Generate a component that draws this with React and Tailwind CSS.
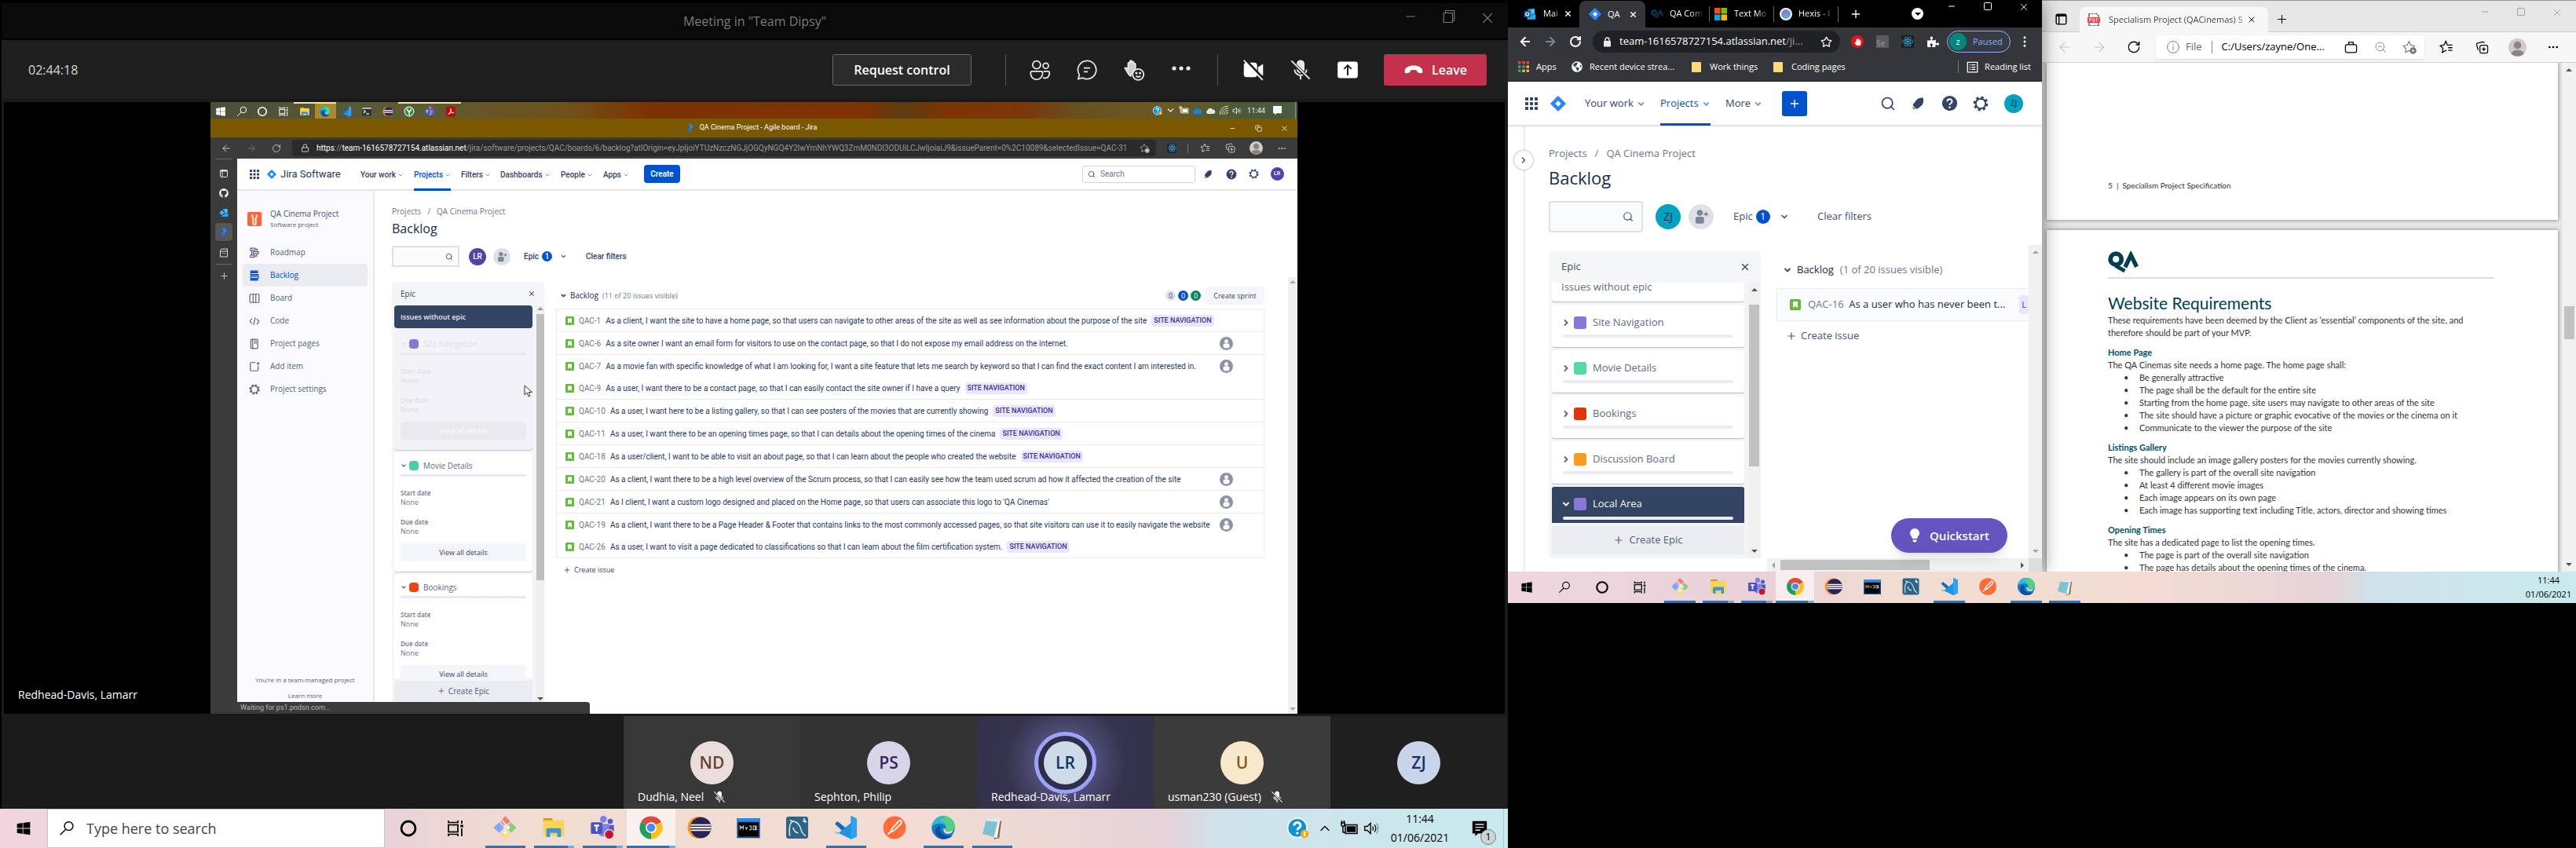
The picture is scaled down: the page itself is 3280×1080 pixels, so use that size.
import React from "react";
import {
  Search, ChevronDown, ChevronUp, ChevronRight, X, Minus, Plus, Ellipsis, EllipsisVertical,
  ArrowLeft, ArrowRight, RotateCw, Lock, Star, Square, ZoomOut, Copy,
} from "lucide-react";
import { FaGithub, FaReact, FaPuzzlePiece, FaHandPaper, FaGlobeAmericas } from "react-icons/fa";

const UI = "font-['Open_Sans','Noto_Sans',sans-serif]";

/* ---------- system and application icons ---------- */

const Svg = ({ c = "w-6 h-6", vb = "0 0 24 24", children, ...rest }) => (
  <svg className={c} viewBox={vb} fill="none" aria-hidden="true" {...rest}>{children}</svg>
);

const WindowsIcon = ({ c }) => (
  <Svg c={c}><path fill="currentColor" d="M2 5l8.500-1.300v7.800H2zM11.500 3.500L22 2v9.500H11.500zM2 12.500h8.500v7.800L2 19zM11.500 12.500H22V22l-10.500-1.500z" /></Svg>
);
const FindIcon = ({ c }) => (
  <Svg c={c} stroke="currentColor" strokeWidth="1.700"><circle cx="15" cy="8.500" r="6.500" /><path d="M10.500 13.500L2 22" /></Svg>
);
const RingIcon = ({ c }) => <Svg c={c}><circle cx="12" cy="12" r="9" stroke="currentColor" strokeWidth="2.800" /></Svg>;
const TaskViewIcon = ({ c }) => (
  <Svg c={c} stroke="currentColor" strokeWidth="1.700">
    <rect x="3" y="7.500" width="12" height="9" /><path d="M3 2v2.500h12V2M3 22v-2.500h12V22M20 2v4M20 12v10" /><path d="M20 7.500v3" strokeWidth="3.500" />
  </Svg>
);
const GitIcon = ({ c }) => (
  <Svg c={c}>
    <path d="M12 1l5 5-5 5-4.500-4.500z" fill="#f47c7c" /><path d="M6.500 7L11 12l-4.500 5L1 12z" fill="#7fa9f7" />
    <path d="M17.500 7L23 12l-5 5-5-5z" fill="#8ec97d" /><path d="M12 13l5 5-5 5-4.500-5z" fill="#fbdc74" />
    <path d="M9 5l6 6.500M12 9v8" stroke="#f6e4de" strokeWidth="1.500" /><circle cx="12" cy="17" r="1.600" fill="#fff" /><circle cx="15" cy="12" r="1.600" fill="#fff" />
  </Svg>
);
const FolderIcon = ({ c }) => (
  <Svg c={c}>
    <path d="M2 4a1 1 0 011-1h7l2 3H2z" fill="#d99a0b" /><path d="M2 5h19a1 1 0 011 1v14H2z" fill="#fcd354" />
    <path d="M5 21v-7a1.500 1.500 0 011.500-1.500h11A1.500 1.500 0 0119 14v7h-3.500v-4h-7v4z" fill="#3d95dc" />
  </Svg>
);
const TeamsIcon = ({ c, rec = true }) => (
  <Svg c={c}>
    <circle cx="19.500" cy="6" r="2.500" fill="#5059c9" /><circle cx="13" cy="4" r="3.200" fill="#7b83eb" />
    <path d="M16 9.500h7V15a4 4 0 01-5 3.500z" fill="#5059c9" /><path d="M8 8.500h10.500V16A5.500 5.500 0 018 17z" fill="#7b83eb" />
    <rect x="1" y="7" width="11" height="11" rx="1" fill="#4b53bc" /><path d="M4 10h5M6.500 10v5.500" stroke="#fff" strokeWidth="1.600" />
    {rec && <circle cx="18.500" cy="18.500" r="4.500" fill="#c4122f" stroke="#f3dcd8" />}
  </Svg>
);
const ChromeIcon = ({ c }) => (
  <Svg c={c}>
    <path d="M12 12L2.500 6.500A11 11 0 0121.500 6.500z" fill="#dd4b3e" /><path d="M12 12L21.500 6.500A11 11 0 0112 23z" fill="#fbc116" />
    <path d="M12 12V23A11 11 0 012.500 6.500z" fill="#1fa05a" /><path d="M12 7h9.800a11 11 0 00-.6-1H3z" fill="#dd4b3e" />
    <circle cx="12" cy="12" r="5.200" fill="#fff" /><circle cx="12" cy="12" r="4" fill="#4a8af4" />
  </Svg>
);
const EclipseIcon = ({ c }) => (
  <Svg c={c}>
    <circle cx="11" cy="12" r="10.500" fill="#f7941e" /><circle cx="13" cy="12" r="10" fill="#2c2255" />
    <path d="M3.500 9.500h19M3 12h20M3.500 14.500h19" stroke="#fff" strokeWidth="1.400" />
  </Svg>
);
const ConsoleIcon = ({ c }) => (
  <Svg c={c}>
    <rect x="1" y="3" width="22" height="19" fill="#1d4f86" /><rect x="1" y="3" width="22" height="3.500" fill="#2d8ae0" />
    <rect x="2.500" y="7" width="19" height="13.500" fill="#000" /><path d="M4 14v-3.500l1.500 2 1.500-2V14M9 11.500l1 2 1-2M12.500 14h2v-3.500h-2M16.500 10.500h2V14h-2zM19.500 10v4h1" stroke="#ddd" strokeWidth=".8" />
  </Svg>
);
const DolphinIcon = ({ c }) => (
  <Svg c={c}>
    <rect x="1.500" y="1.500" width="21" height="21" rx="2.500" fill="#2c6487" />
    <path d="M5 20C4 13 5 7 8 6c4 0 7 4 8 9 1 3 3 4 4 5M8 6c-1-1-2-1-3-1M8 12c1 3 3 5 5 5M18 4l3 3M19 3l-1 3 2 1" stroke="#e4eef4" strokeWidth="1.100" />
  </Svg>
);
const CodeIcon = ({ c }) => (
  <Svg c={c}><path d="M17 1l5.500 2.500v17L17 23 1.500 8.500 4 6l13 10.500z" fill="#0a6fb8" /><path d="M17 1l5.500 2.500v17L17 23 1.500 15.500 4 18 17 7.500z" fill="#1f94e0" /><path d="M17 1l5.500 2.500v17L17 23z" fill="#2ba5f3" /></Svg>
);
const PostmanIcon = ({ c }) => (
  <Svg c={c}>
    <circle cx="12" cy="12" r="10.800" fill="#ff6c37" /><path d="M18 5.500a2 2 0 010 3l-6 6-4 2 2-4 5.500-6a2 2 0 012.500-1zM5.500 18.500l4-3.500" stroke="#fff" strokeWidth="1.400" />
  </Svg>
);
const EdgeIcon = ({ c }) => (
  <Svg c={c}>
    <circle cx="12" cy="12" r="11" fill="#1279c4" /><path d="M1.200 11C2 4 8 1 12 1c7 0 11 5 11 9.500 0 4-3.500 5.500-6.500 5.500-2 0-3-.8-2.500-1.600C15 12.500 14.500 8 9.500 8 5 8 2 10 1.200 11z" fill="#35b6d8" />
    <path d="M14 1.200c6 1 9 5.500 9 9.300 0 4-3.500 5.500-6.500 5.500-2 0-3-.8-2.500-1.600C16 11 15 6 9 5z" fill="#55d377" opacity=".85" />
    <path d="M9.500 10.500C7.500 15 11 20 17 20c2 0 3.500-.5 4.500-1A11 11 0 0112 23C7 23 4.500 19 4.500 15.500c0-3 2.500-5 5-5z" fill="#0c4f9e" />
    <path d="M14 14.400c-.5.800.5 1.600 2.500 1.600 2 0 4-.5 5.200-1.800-1 2.500-2.700 3.600-5 3.600-3.500 0-5-2.500-4.200-5.300.5 0 1.700.8 1.500 1.900z" fill="#f4e3dc" />
  </Svg>
);
const NotepadIcon = ({ c }) => (
  <Svg c={c}><path d="M17 4l4 2-2 16-5 1z" fill="#8a6b3a" /><path d="M15 3l5 1-3 18-4-1z" fill="#f2f6f6" /><path d="M7 3l11 1-4 17-11-3z" fill="#7cc3cf" /><path d="M7 3l11 1-.6 2.500L6 5.400z" fill="#dfeef0" /></Svg>
);
const TerminalIcon = ({ c }) => (
  <Svg c={c}><rect x="2" y="3" width="20" height="18" fill="#2c3138" /><path d="M2 5h20" stroke="#ccc" strokeWidth="3" /><path d="M5 9.500l4 3-4 3M11 17h6" stroke="#fff" strokeWidth="2" /></Svg>
);
const SproutIcon = ({ c }) => (
  <Svg c={c}><circle cx="12" cy="12" r="10" fill="#2e8b3a" stroke="#e9f5e6" strokeWidth="2" /><path d="M12 20V10M12 12C9 12 8 9 8 6M12 12c3 0 4-3 4-6" stroke="#fff" strokeWidth="2.500" /></Svg>
);
const AcrobatIcon = ({ c }) => (
  <Svg c={c}><rect x="2" y="1" width="20" height="22" rx="2" fill="#b50b0b" /><path d="M6 18c5-3 7-8 6-12-2 0 0 8 7 9-5-1-9 0-13 3z" stroke="#fff" strokeWidth="1.600" /></Svg>
);
const JiraIcon = ({ c }) => (
  <Svg c={c}><path d="M12 0l12 12-12 12L0 12z" fill="#2684ff" /><path d="M12 0v8.500L6 15 0 12z" fill="#2f87ff" /><path d="M12 7.500l4.500 4.500-4.500 4.500L7.500 12z" fill="#fff" /></Svg>
);
const JiraAppIcon = ({ c }) => (
  <Svg c={c}><path d="M12 0l8 8-8 9V8L8 4z" fill="#2684ff" /><path d="M12 24l-8-8 8-9v9l4 4z" fill="#1f6fe8" /></Svg>
);
const OutlookIcon = ({ c }) => (
  <Svg c={c}>
    <path d="M8 2h13v18H8z" fill="#1490df" /><path d="M14 2h7v9h-7z" fill="#4cc2f7" /><path d="M7 12l8 5 8-5v10H7z" fill="#2fa9ea" /><rect x="1" y="6" width="12" height="12" rx="1" fill="#0f5fa8" />
    <circle cx="7" cy="12" r="3" stroke="#fff" strokeWidth="1.800" />
  </Svg>
);
const QaMark = ({ c, color = "#003f4f" }) => (
  <Svg c={c} vb="0 0 40 28" preserveAspectRatio="none">
    <ellipse cx="10.500" cy="10.500" rx="7.200" ry="7.200" stroke={color} strokeWidth="6" /><path d="M10 19l12 7" stroke={color} strokeWidth="5" />
    <path d="M22.500 21l7.500-16 7.500 15.500" stroke={color} strokeWidth="5.500" />
  </Svg>
);
const HelpIcon = ({ c }) => (
  <Svg c={c}><circle cx="12" cy="12" r="11" fill="currentColor" /><path d="M8.500 9.500a3.500 3.500 0 117 0c0 2.500-3.500 2.500-3.500 5" stroke="#fff" strokeWidth="2.300" /><circle cx="12" cy="18" r="1.500" fill="#fff" /></Svg>
);
const BellIcon = ({ c }) => (
  <Svg c={c}><path d="M21 2c-6 0-10 1-13 6l-4 5c-1 1.500-.5 2 .5 3l4 4c1 1 1.500 1.500 3 .5l5-4c5-3 5.500-8 4.500-14.500z" fill="currentColor" /><path d="M4 18l3 3a2.500 2.500 0 01-3-3z" fill="currentColor" stroke="currentColor" /></Svg>
);
const GearIcon = ({ c }) => (
  <Svg c={c} stroke="currentColor">
    <circle cx="12" cy="12" r="9.500" strokeWidth="3.500" strokeDasharray="4 3.460" /><circle cx="12" cy="12" r="7.500" strokeWidth="2.400" />
  </Svg>
);
const GridIcon = ({ c, colors = ["currentColor"] }) => (
  <Svg c={c} vb="0 0 16 16">
    {[0, 1, 2, 3, 4, 5, 6, 7, 8].map((i) => (
      <rect key={i} x={(i % 3) * 6} y={Math.floor(i / 3) * 6} width="4" height="4" rx=".8" fill={colors[i % colors.length]} />
    ))}
  </Svg>
);
const StoryIcon = ({ c }) => (
  <Svg c={c} vb="0 0 16 16"><rect width="16" height="16" rx="2" fill="#63ba3c" /><path d="M4.500 3.500h7v9.500L8 10l-3.500 3z" fill="#fff" /></Svg>
);
const AddPersonIcon = ({ c }) => (
  <Svg c={c}><circle cx="10" cy="6" r="4.500" fill="currentColor" /><rect x="3.500" y="12" width="13" height="10.500" rx="3" fill="currentColor" /><path d="M19.500 4.500v7M16 8h7" stroke="currentColor" strokeWidth="2" /></Svg>
);
const UserDisc = ({ c }) => (
  <Svg c={c}><circle cx="12" cy="12" r="12" fill="#8993a4" /><circle cx="12" cy="8" r="3.500" fill="#fff" /><rect x="6.500" y="12" width="11" height="8" rx="2.500" fill="#fff" /></Svg>
);
const ProfileDisc = ({ c }) => (
  <Svg c={c}><circle cx="12" cy="12" r="12" fill="#cfccc9" /><circle cx="12" cy="9" r="5" fill="#8b8683" /><path d="M3.500 20a9 7 0 0117 0A12 12 0 013.500 20z" fill="#8b8683" /></Svg>
);
const StarPlus = ({ c }) => (
  <Svg c={c} stroke="currentColor" strokeWidth="1.500"><path d="M13 19l-2-1-6 3 1.200-6.600L1.500 9.700l6.500-1L11 2.500l3 6.200 6.500 1-2 2" /><circle cx="18" cy="18" r="5" fill="currentColor" /><path d="M18 15.500v5M15.500 18h5" stroke="#fff" strokeWidth="1.200" /></Svg>
);
const StarList = ({ c }) => (
  <Svg c={c} stroke="currentColor" strokeWidth="1.700"><path d="M12 18l-1-.5L5 21l1.200-7L1.500 9.500 8 8.500 11 2l2.700 6.500h8.300M15 13h7M15 17.500h7" /></Svg>
);
const CollectIcon = ({ c }) => (
  <Svg c={c} stroke="currentColor" strokeWidth="1.700"><rect x="8" y="8" width="14" height="14" rx="3" /><path d="M15 11.500v7M11.500 15h7M5 17l-3-10a2.500 2.500 0 012-3l9-2a2.500 2.500 0 013 2" /></Svg>
);
const PagesIcon = ({ c }) => (
  <Svg c={c} stroke="currentColor" strokeWidth="2"><rect x="3" y="3" width="18" height="18" rx="2.500" /><path d="M3 5h18" strokeWidth="4" /><path d="M8 5v16" /></Svg>
);
const VolumeIcon = ({ c }) => (
  <Svg c={c} stroke="currentColor" strokeWidth="1.600"><path d="M2 9h4l5-5v16l-5-5H2zM14 9q2 3 0 6M17 6.500q4 5.500 0 11" /><path d="M20 4q5 8 0 16" opacity=".35" /></Svg>
);
const PowerIcon = ({ c }) => (
  <Svg c={c} stroke="currentColor" strokeWidth="1.500"><rect x="7" y="7.500" width="15" height="11" /><rect x="9.500" y="10" width="10" height="6" fill="currentColor" /><path d="M1 5h6M2 5v3q2 3 4 0V5M2.500 2v3M5.500 2v3M4 9v8h3" /></Svg>
);
const TipIcon = ({ c }) => (
  <Svg c={c}><circle cx="11" cy="11.500" r="10.500" fill="#1292d6" stroke="#fff" strokeWidth="1.500" /><path d="M7.500 9a3.500 3.500 0 117 0c0 2.500-3.500 2.500-3.500 5M11 16v2.500" stroke="#fff" strokeWidth="2.500" /><circle cx="19" cy="18" r="4.500" fill="#f6a91b" /><path d="M19 15.500v5" stroke="#fff" strokeWidth="1.500" /></Svg>
);
const NoteIcon = ({ c }) => (
  <Svg c={c}><path d="M2 2h20v17H10l-4 4v-4H2z" fill="currentColor" /><path d="M6 6.500h12M6 10.500h12M6 14.500h7" stroke="#d6ecee" strokeWidth="1.500" /></Svg>
);
const MicOffIcon = ({ c }) => (
  <Svg c={c} stroke="currentColor" strokeWidth="1.600"><rect x="8.500" y="2" width="7" height="13" rx="3.500" fill="currentColor" /><path d="M5.500 11.500a6.500 6.500 0 0013 0M12 18v4.500" /><path d="M2.500 3l19 19" stroke="#222" strokeWidth="3.500" /><path d="M2 2l20 20" /></Svg>
);

/* ---------- windows taskbars ---------- */

const APPS = [
  { name: "Git", Icon: GitIcon, open: true },
  { name: "File Explorer", Icon: FolderIcon, open: true, many: true },
  { name: "Teams", Icon: TeamsIcon, open: true, many: true },
  { name: "Chrome", Icon: ChromeIcon, open: true, many: true, active: true },
  { name: "Eclipse", Icon: EclipseIcon },
  { name: "MySQL", Icon: ConsoleIcon },
  { name: "Workbench", Icon: DolphinIcon },
  { name: "Visual Studio Code", Icon: CodeIcon, open: true },
  { name: "Postman", Icon: PostmanIcon },
  { name: "Edge", Icon: EdgeIcon, open: true },
  { name: "Notepad", Icon: NotepadIcon, open: true },
];

const AppButtons = ({ cell, icon, bar }) =>
  APPS.map(({ name, Icon, open, many, active }) => (
    <button key={name} aria-label={name} className={`${cell} flex h-full shrink-0 flex-col items-center ${active ? "bg-white/60" : ""}`}>
      <span className="flex flex-1 items-center"><Icon c={icon} /></span>
      <span className={`flex ${active ? "w-full" : bar} ${open ? "bg-[#0a7bd9]" : ""} h-[3px] justify-end`}>
        {many && <span className="h-full w-2 bg-[#64aee8]" />}
      </span>
    </button>
  ));

const BAR_BG = "bg-[linear-gradient(90deg,#efd6de_0%,#e8d1d8_25%,#f1dcd2_35%,#f1dbd2_62%,#e6d3d8_77%,#cfe1e9_81%,#c8ebed_100%)]";

const MainTaskbar = () => (
  <footer className={`flex h-[50px] shrink-0 text-black ${BAR_BG}`}>
    <button aria-label="Start" className="flex w-[60px] items-center justify-center"><WindowsIcon c="h-5 w-5" /></button>
    <label className="flex w-[430px] items-center border border-[#c9c3c5] bg-white pl-[14px]">
      <FindIcon c="h-5 w-5" />
      <input aria-label="Type here to search" placeholder="Type here to search" className="ml-[15px] w-72 bg-transparent text-[18px] text-[#444] outline-none placeholder:text-[#444]" />
    </label>
    <button aria-label="Cortana" className="flex w-[60px] items-center justify-center"><RingIcon c="h-6 w-6" /></button>
    <button aria-label="Task view" className="mr-[2px] flex w-[60px] items-center justify-center"><TaskViewIcon c="h-6 w-6" /></button>
    <AppButtons cell="w-[62px]" icon="h-8 w-8" bar="w-[51px]" />
    <div className="flex-1" />
    <div className="flex w-[40px] items-center justify-center"><TipIcon c="h-7 w-7" /></div>
    <div className="flex w-[28px] items-center justify-center"><ChevronUp className="h-5 w-5" strokeWidth={1.5} /></div>
    <div className="flex w-[34px] items-center justify-center"><PowerIcon c="h-6 w-6" /></div>
    <div className="flex w-[22px] items-center justify-center"><VolumeIcon c="h-5 w-5" /></div>
    <div className="flex w-[102px] flex-col items-center justify-center text-sm leading-6"><span>11:44</span><span>01/06/2021</span></div>
    <div className="relative flex w-[50px] items-center justify-center">
      <NoteIcon c="h-[22px] w-[22px]" />
      <span className="absolute bottom-1 right-1 flex h-5 w-5 items-center justify-center rounded-full border border-[#777] bg-[#ccd4d5] text-[13px]">1</span>
    </div>
    <div className="ml-[5px] mr-[5px] w-px bg-[#aec5c8]" />
  </footer>
);

const SideTaskbar = () => (
  <footer className={`relative z-20 flex h-10 shrink-0 text-black ${BAR_BG}`}>
    <button aria-label="Start" className="flex w-12 items-center justify-center"><WindowsIcon c="h-4 w-4" /></button>
    <button aria-label="Search" className="flex w-12 items-center justify-center"><FindIcon c="h-4 w-4" /></button>
    <button aria-label="Cortana" className="flex w-12 items-center justify-center"><RingIcon c="h-[18px] w-[18px]" /></button>
    <button aria-label="Task view" className="mr-[2px] flex w-12 items-center justify-center"><TaskViewIcon c="h-[18px] w-[18px]" /></button>
    <AppButtons cell="w-[49px]" icon="h-6 w-6" bar="w-10" />
    <div className="flex-1" />
    <div className="flex w-[70px] flex-col items-center justify-center text-[11px] leading-[18px]"><span>11:44</span><span>01/06/2021</span></div>
  </footer>
);

/* ---------- shared screen: Jira backlog in Edge ---------- */

const MINI_APPS = [
  [WindowsIcon, 0], [FindIcon, 0], [RingIcon, 0], [TaskViewIcon, 0], [FolderIcon, 1], [EdgeIcon, 2],
  [CodeIcon, 0], [TerminalIcon, 0], [EclipseIcon, 0], [SproutIcon, 1], [TeamsIcon, 1], [AcrobatIcon, 1],
];

const SharedTaskbar = () => (
  <div className="flex h-[21px] shrink-0 items-center bg-[linear-gradient(90deg,#4c4f37_0%,#5c5b33_18%,#6f5219_33%,#7d3300_40%,#7e3300_60%,#5d3d12_64%,#7f3400_68%,#79380a_75%,#685120_80%,#6b5a22_88%,#475a3c_96%,#4a5c40_100%)] text-white">
    <div className="grid h-full w-[319px] grid-cols-12">
      {MINI_APPS.map(([Icon, state], i) => (
        <div key={i} className={`flex items-center justify-center border-t-2 ${state ? "border-[#efe3b4]" : "border-transparent"} ${state === 2 ? "bg-[#a9892c]" : ""}`}>
          <Icon c="h-[14px] w-[14px]" rec={false} />
        </div>
      ))}
    </div>
    <div className="flex-1" />
    <div className="flex items-center gap-[4px]">
      <TipIcon c="h-[12px] w-[12px]" />
      <ChevronDown className="h-[13px] w-[13px]" />
      <PowerIcon c="h-[13px] w-[13px]" />
      <Svg c="h-[12px] w-[13px]"><path d="M4 20a5 5 0 010-9 7 7 0 0113-2 5.500 5.500 0 012 11z" fill="#1683dd" /></Svg>
      <Svg c="h-[12px] w-[13px]"><path d="M4 20a5 5 0 010-9 7 7 0 0113-2 5.500 5.500 0 012 11z" fill="#e6e6e6" /></Svg>
      <Svg c="h-[13px] w-[13px]" stroke="#ddd" strokeWidth="1.800"><path d="M2 22A20 20 0 0122 2M7 22A15 15 0 0122 7M12 22a10 10 0 0110-10M17 22a5 5 0 015-5" /></Svg>
      <VolumeIcon c="h-[12px] w-[12px]" />
    </div>
    <span className="ml-[7px] w-[24px] text-[9px]">11:44</span>
    <NoteIcon c="ml-[8px] mr-[16px] h-[13px] w-[13px]" />
    <div className="mr-[2px] h-full w-px bg-[#8b9279]" />
  </div>
);

const EdgeDarkChrome = () => (
  <>
    <div className="flex h-6 shrink-0 items-center bg-[#7a5800] font-['Roboto',sans-serif] text-[9px] text-white">
      <div className="flex flex-1 items-center justify-center gap-[6px] pl-[92px]"><JiraAppIcon c="h-3 w-3" /><span className="text-[9px]">QA Cinema Project - Agile board - Jira</span></div>
      <button aria-label="Minimise" className="flex w-[33px] justify-center"><Minus className="h-[9px] w-[9px]" /></button>
      <button aria-label="Restore" className="flex w-[33px] justify-center"><Copy className="h-[9px] w-[9px]" /></button>
      <button aria-label="Close" className="flex w-[33px] justify-center"><X className="h-[11px] w-[11px]" /></button>
    </div>
    <div className="flex h-[27px] shrink-0 items-center bg-[#3b3b3b] pl-1 text-[#d8d8d8]">
      <button aria-label="Back" className="flex w-8 justify-center"><ArrowLeft className="h-[14px] w-[14px]" strokeWidth={1.5} /></button>
      <button aria-label="Forward" className="flex w-8 justify-center text-[#777]"><ArrowRight className="h-[14px] w-[14px]" strokeWidth={1.5} /></button>
      <button aria-label="Reload" className="flex w-8 justify-center"><RotateCw className="h-3 w-3" strokeWidth={1.6} /></button>
      <div className="ml-1 flex h-[21px] min-w-0 flex-1 items-center rounded-sm bg-[#2a2a2b]">
        <Lock className="ml-[11px] h-[11px] w-[11px] shrink-0" />
        <span className="ml-[9px] flex-1 overflow-hidden whitespace-nowrap font-['Roboto',sans-serif] text-[10px] text-[#9a9a9a]">
          <b className="font-normal text-white">https</b>://<b className="font-normal text-white">team-1616578727154.atlassian.net</b>/jira/software/projects/QAC/boards/6/backlog?atlOrigin=eyJpIjoiYTUzNzczNGJjOGQyNGQ4Y2IwYmNhYWQ3ZmM0NDI3ODUiLCJwIjoiaiJ9&amp;issueParent=0%2C10089&amp;selectedIssue=QAC-31
        </span>
        <StarPlus c="mx-2 h-[13px] w-[13px] shrink-0 text-[#aaa]" />
      </div>
      <div className="flex w-[40px] justify-center"><span className="flex h-3 w-3 items-center justify-center bg-[#1c2733]"><FaReact className="h-[11px] w-[11px] text-[#4cb8e6]" /></span></div>
      <div className="h-3 w-px bg-[#777]" />
      <div className="ml-[5px] flex w-8 justify-center"><StarList c="h-[13px] w-[13px]" /></div>
      <div className="flex w-8 justify-center"><CollectIcon c="h-[13px] w-[13px]" /></div>
      <div className="flex w-[34px] justify-center"><ProfileDisc c="h-[17px] w-[17px]" /></div>
      <div className="mr-[4px] flex w-8 justify-center"><Ellipsis className="h-3 w-3" /></div>
    </div>
  </>
);

const EdgeRail = () => (
  <div className="flex w-[34px] shrink-0 flex-col items-center bg-[#3b3b3b] text-[#ddd]">
    <div className="h-px w-[22px] bg-[#666]" />
    <div className="mt-[5px] flex h-[25px] items-center"><PagesIcon c="h-3 w-3" /></div>
    <div className="flex h-[25px] items-center"><FaGithub className="h-3 w-3 text-white" /></div>
    <div className="flex h-[26px] items-center"><OutlookIcon c="h-3 w-3" /></div>
    <div className="flex h-[23px] w-[22px] items-center justify-center rounded-sm bg-[#55565a] shadow"><JiraAppIcon c="h-3 w-3" /></div>
    <div className="mt-[2px] flex h-[25px] items-center">
      <Svg c="h-3 w-3" stroke="currentColor" strokeWidth="2"><path d="M3 5l3-3h15v20H3zM3 8h18M7 13h2M11 13h2M15 13h2" /></Svg>
    </div>
    <div className="mt-[2px] h-px w-[22px] bg-[#666]" />
    <Plus className="mt-2 h-[13px] w-[13px]" strokeWidth={1.5} />
  </div>
);

const miniNav = [
  ["Your work", "w-[68px]"], ["Projects", "w-[60px]"], ["Filters", "w-[50px]"],
  ["Dashboards", "w-[77px]"], ["People", "w-[54px]"], ["Apps", "w-[52px]"],
];

const MiniJiraHeader = () => (
  <header className="flex h-[41px] shrink-0 items-center border-b-2 border-[#e3e5ea] bg-white pl-4 font-['Roboto',sans-serif] text-[10px] font-medium text-[#344563]">
    <GridIcon c="h-3 w-3" />
    <JiraIcon c="ml-[10px] h-3 w-3" />
    <span className="ml-[5px] w-[102px] text-[13px] font-normal text-[#253858]">Jira Software</span>
    <nav className="flex h-full">
      {miniNav.map(([label, w]) => {
        const on = label === "Projects";
        return (
          <div key={label} className={`${w} flex h-full`}>
            <a href="#nav" className={`-mb-[2px] flex items-center gap-[2px] border-b-[3px] pt-[3px] ${on ? "border-[#0052cc] text-[#0052cc]" : "border-transparent"}`}>
              {label}<ChevronDown className="h-2 w-2 opacity-60" strokeWidth={3} />
            </a>
          </div>
        );
      })}
    </nav>
    <button className="h-[23px] w-[46px] rounded-sm bg-[#0052cc] font-semibold text-white">Create</button>
    <div className="flex-1" />
    <label className="flex h-[22px] w-[144px] items-center rounded-[3px] border border-[#cfd3da] pl-[6px]">
      <Search className="h-[10px] w-[10px]" />
      <input aria-label="Search" placeholder="Search" className="ml-[6px] w-24 font-normal outline-none placeholder:text-[#6b778c]" />
    </label>
    <div className="flex w-8 justify-center"><BellIcon c="h-3 w-3" /></div>
    <div className="flex w-7 justify-center"><HelpIcon c="h-[14px] w-[14px]" /></div>
    <div className="flex w-7 justify-center"><GearIcon c="h-[13px] w-[13px]" /></div>
    <div className="mr-[10px] flex w-8 justify-center"><span className="flex h-[17px] w-[17px] items-center justify-center rounded-full bg-[#5243aa] text-[7px] text-white">LR</span></div>
  </header>
);

const sideItems = [
  ["Roadmap", <><rect x="3" y="2" width="11" height="4.500" rx="1" /><rect x="9" y="9.500" width="12" height="4.500" rx="1" /><rect x="3" y="17" width="9" height="4.500" rx="1" /><path d="M6 7v10M15 4h3v5M12 19h5v-5" /></>],
  ["Backlog", <><path d="M4 2h15v4H4zM6 10h16M4 6v16h15v-4H4M4 14h17v4" /><path d="M5 4h13M5 20h13M5 10h15" strokeWidth="3" /></>],
  ["Board", <><rect x="2" y="3" width="20" height="18" rx="2" /><path d="M9 3v18M15 3v18" /></>],
  ["Code", <path d="M7 6l-5 6 5 6M17 7l5 6-5 6M13.500 4l-3 16" />],
  ["Project pages", <><rect x="4" y="2" width="15" height="20" rx="2" /><path d="M8 2v20M11 6h6M11 10h6" /></>],
  ["Add item", <path d="M14 3H5a2 2 0 00-2 2v14a2 2 0 002 2h13a2 2 0 002-2v-9M20 2v6M17 5h6" />],
  ["Project settings", null],
];

const MiniSidebar = () => (
  <aside className="flex w-[175px] shrink-0 flex-col border-r-2 border-[#e6e7ed] bg-[#fafafe] text-[10px] text-[#505f79]">
    <div className="mt-[22px] flex items-center pl-[13px]">
      <span className="flex h-[18px] w-[18px] items-center justify-center rounded-[2px] bg-[#ff6530]">
        <Svg c="h-4 w-4"><path d="M8 3v5a2 2 0 001.500 2v10a2.500 2.500 0 005 0V10A2 2 0 0016 8V3" stroke="#f0f0f0" strokeWidth="3" /></Svg>
      </span>
      <div className="ml-[11px] flex flex-col leading-[14px]">
        <span className="text-[10px] font-medium text-[#42526e]">QA Cinema Project</span><span className="text-[8px]">Software project</span>
      </div>
    </div>
    <nav className="mt-[14px] flex flex-col px-[7px]">
      {sideItems.map(([label, icon]) => {
        const on = label === "Backlog";
        return (
          <a href="#side" key={label} className={`flex h-[29px] items-center rounded-sm pl-2 ${on ? "bg-[#ebecf0] text-[#0052cc]" : ""}`}>
            {icon ? <Svg c="h-[14px] w-[14px]" stroke="currentColor" strokeWidth="2">{icon}</Svg> : <GearIcon c="h-[14px] w-[14px]" />}
            <span className="ml-[13px]">{label}</span>
          </a>
        );
      })}
    </nav>
    <div className="flex-1" />
    <div className="mb-4 flex flex-col items-center gap-[6px] text-[8px] leading-[14px]"><span>You're in a team-managed project</span><a href="#more" className="font-medium">Learn more</a></div>
  </aside>
);

const MiniCard = ({ color, name, faded }) => (
  <div className={`mr-1 flex shrink-0 flex-col rounded-sm px-2 pb-[13px] pt-[9px] text-[9px] shadow-[0_1px_1px_#c1c7d0] ${faded ? "bg-[#f3f3f7]" : "bg-white"}`}>
    <div className={`flex h-4 items-center font-medium ${faded ? "text-[#dddee5]" : "text-[#5e6c84]"}`}>
      <ChevronDown className="h-2 w-2" strokeWidth={4} />
      <span className={`ml-[3px] h-3 w-3 rounded-sm ${color}`} />
      <span className="ml-[6px] text-[10px]">{name}</span>
    </div>
    <div className="mt-[3px] h-[3px] shrink-0 rounded-full bg-[#e8e9ee]" />
    <div className={`mt-[14px] flex flex-col ${faded ? "text-[#dddee5]" : "text-[#6b778c]"}`}>
      <b className="h-[13px] text-[8px] font-semibold leading-[13px]">Start date</b><span className="h-3 leading-3">None</span>
      <b className="mt-3 h-[13px] text-[8px] font-semibold leading-[13px]">Due date</b><span className="h-3 leading-3">None</span>
    </div>
    <button className={`mt-[9px] h-[23px] shrink-0 rounded-sm font-medium ${faded ? "bg-[#e9e9ee] text-white" : "bg-[#f4f5f9] text-[#344563]"}`}>View all details</button>
  </div>
);

const Tri = ({ dir, c = "text-[#555]" }) => (
  <Svg c={`h-2 w-2 ${c}`} vb="0 0 8 8">
    <path fill="currentColor" d={{ up: "M0 6l4-4 4 4z", down: "M0 2l4 4 4-4z", left: "M6 0L2 4l4 4z", right: "M2 0l4 4-4 4z" }[dir]} />
  </Svg>
);

const issues = [
  ["QAC-1", "As a client, I want the site to have a home page, so that users can navigate to other areas of the site as well as see information about the purpose of the site", true, true],
  ["QAC-6", "As a site owner I want an email form for visitors to use on the contact page, so that I do not expose my email address on the internet.", false, true],
  ["QAC-7", "As a movie fan with specific knowledge of what I am looking for, I want a site feature that lets me search by keyword so that I can find the exact content I am interested in.", false, false],
  ["QAC-9", "As a user, I want there to be a contact page, so that I can easily contact the site owner if I have a query", true, true],
  ["QAC-10", "As a user, I want here to be a listing gallery, so that I can see posters of the movies that are currently showing", true, true],
  ["QAC-11", "As a user, I want there to be an opening times page, so that I can details about the opening times of the cinema", true, true],
  ["QAC-18", "As a user/client, I want to be able to visit an about page, so that I can learn about the people who created the website", true, true],
  ["QAC-20", "As a client, I want there to be a high level overview of the Scrum process, so that I can easily see how the team used scrum ad how it affected the creation of the site", false, true],
  ["QAC-21", "As I client, I want a custom logo designed and placed on the Home page, so that users can associate this logo to 'QA Cinemas'", false, true],
  ["QAC-19", "As a client, I want there to be a Page Header & Footer that contains links to the most commonly accessed pages, so that site visitors can use it to easily navigate the website", false, false],
  ["QAC-26", "As a user, I want to visit a page dedicated to classifications so that I can learn about the film certification system.", true, false],
];

const MiniBacklog = () => (
  <main className="flex min-w-0 flex-1 flex-col bg-white pl-[22px] text-[9px] text-[#344563]">
    <div className="mt-[18px] flex h-4 items-center gap-[8px] text-[10px] text-[#6b778c]"><a href="#p">Projects</a><span>/</span><a href="#qa">QA Cinema Project</a></div>
    <h1 className="mt-[2px] h-6 text-base font-medium leading-6 text-[#172b4d]">Backlog</h1>
    <div className="mt-[10px] flex h-[27px] items-center font-['Roboto',sans-serif] text-[10px] font-medium">
      <label className="flex h-full w-[86px] items-center border-2 border-[#dfe1e6] bg-[#fafbfc] pr-[6px]"><input aria-label="Filter issues" className="w-[60px] bg-transparent outline-none" /><Search className="ml-auto h-[10px] w-[10px]" /></label>
      <span className="ml-3 flex h-[22px] w-[22px] items-center justify-center rounded-full bg-[#5243aa] text-[10px] text-white">LR</span>
      <span className="ml-[9px] flex h-[22px] w-[22px] items-center justify-center rounded-full bg-[#dfe1e6] text-[#7a869a]"><AddPersonIcon c="h-[14px] w-[14px]" /></span>
      <button className="ml-[17px] flex w-[79px] items-center gap-[4px]">Epic<span className="flex h-[13px] w-[13px] items-center justify-center rounded-full bg-[#0052cc] text-white">1</span><ChevronDown className="ml-[6px] h-[9px] w-[9px]" strokeWidth={3} /></button>
      <button>Clear filters</button>
    </div>
    <div className="mt-[13px] flex min-h-0 flex-1">
      <section className="relative mb-[15px] mt-[6px] flex w-[194px] shrink-0 flex-col rounded-t bg-[#f4f5f9]">
        <div className="flex h-[30px] shrink-0 items-center justify-between px-[11px] text-[10px] font-medium"><span>Epic</span><X className="h-[10px] w-[10px]" strokeWidth={2.500} /></div>
        <div className="flex min-h-0 flex-1">
          <div className="flex min-h-0 flex-1 flex-col pl-[3px]">
            <div className="flex min-h-0 flex-1 flex-col gap-[3px] overflow-hidden">
              <div className="mr-1 flex h-[29px] shrink-0 items-center rounded-sm bg-[#344563] pl-2 font-semibold text-[#e6e9ef]">Issues without epic</div>
              <MiniCard faded color="bg-[#8777d9]" name="Site Navigation" />
              <MiniCard color="bg-[#4fcca4]" name="Movie Details" />
              <MiniCard color="bg-[#ee4310]" name="Bookings" />
            </div>
            <button className="mb-px mr-1 mt-[3px] flex h-[26px] shrink-0 items-center justify-center gap-1 bg-[#ebecf1] text-[10px] font-medium text-[#505f79]"><Plus className="h-[10px] w-[10px]" />Create Epic</button>
          </div>
          <div className="flex w-[11px] flex-col items-center justify-between bg-[#efeff1]"><div className="flex w-full flex-col items-center"><Tri dir="up" c="text-[#999]" /><div className="mt-[3px] h-[339px] w-[10px] bg-[#bebebe]" /></div><Tri dir="down" /></div>
        </div>
        <Svg c="absolute left-[168px] top-[131px] h-4 w-3" vb="0 0 12 16"><path d="M1 1v12l3-3 2 5 2-1-2-4.500h4.500z" fill="#fff" stroke="#333" /></Svg>
      </section>
      <section className="ml-[15px] mr-[30px] flex min-w-0 flex-1 flex-col pt-3">
        <div className="flex h-[23px] items-center">
          <ChevronDown className="ml-[5px] h-[9px] w-[9px]" strokeWidth={4} /><b className="ml-1 text-[10px] font-medium text-[#172b4d]">Backlog</b><span className="ml-[5px] text-[9px] text-[#6b778c]">(11 of 20 issues visible)</span>
          <div className="flex-1" />
          <span className="h-[13px] w-[13px] rounded-full bg-[#dfe1e6] text-center leading-[13px]">0</span>
          <span className="ml-[3px] h-[13px] w-[13px] rounded-full bg-[#0052cc] text-center leading-[13px] text-white">0</span>
          <span className="ml-[3px] h-[13px] w-[13px] rounded-full bg-[#00875a] text-center leading-[13px] text-white">0</span>
          <button className="ml-[6px] h-full w-[75px] rounded-sm bg-[#f4f5f9] font-medium">Create sprint</button>
        </div>
        <ul className="mt-[5px] flex h-[318px] flex-col border border-[#ebecf0] font-['Roboto',sans-serif] text-[10px]">
          {issues.map(([key, text, tag, line]) => (
            <li key={key} className={`flex flex-1 items-center whitespace-nowrap pl-[11px] pr-[39px] ${line ? "border-b border-[#ebecf0]" : ""}`}>
              <StoryIcon c="h-[11px] w-[11px] shrink-0" />
              <a href="#issue" className="ml-[6px] text-[#6b778c]">{key}</a>
              <span className="ml-[6px] text-[#253858]">{text}</span>
              {tag ? <span className="ml-[6px] rounded-sm bg-[#eae6ff] px-[3px] text-[9px] font-medium leading-[15px] text-[#403294]">SITE NAVIGATION</span> : <span className="ml-auto"><UserDisc c="h-[17px] w-[17px]" /></span>}
            </li>
          ))}
        </ul>
        <button className="mt-[7px] flex h-4 items-center gap-1 pl-[9px] font-medium"><Plus className="h-[10px] w-[10px]" />Create issue</button>
      </section>
      <div className="flex w-3 flex-col items-center justify-between bg-[#f1f1f1] py-[2px]"><Tri dir="up" c="text-[#aaa]" /><Tri dir="down" c="text-[#aaa]" /></div>
    </div>
  </main>
);

const SharedScreen = () => (
  <div className="flex min-w-0 flex-1 flex-col overflow-hidden">
    <SharedTaskbar />
    <EdgeDarkChrome />
    <div className="flex min-h-0 flex-1">
      <EdgeRail />
      <div className="relative flex min-w-0 flex-1 flex-col">
        <MiniJiraHeader />
        <div className="flex min-h-0 flex-1"><MiniSidebar /><MiniBacklog /></div>
        <div className="absolute bottom-0 left-0 h-[15px] w-[449px] rounded-tr-sm bg-[#3b3b3b] pl-1 font-['Roboto',sans-serif] text-[9px] leading-[14px] text-[#b9b9b9]">Waiting for ps1.pndsn.com...</div>
      </div>
    </div>
  </div>
);

/* ---------- Teams meeting window ---------- */

const IconCell = ({ label, children }) => <button aria-label={label} className="flex w-[60px] justify-center text-[#e8e8e8]">{children}</button>;

const people = [
  { i: "ND", n: "Dudhia, Neel", mute: true, tile: "bg-[#383838]", disc: "bg-[#e9dedb] text-[#6b4332]" },
  { i: "PS", n: "Sephton, Philip", tile: "bg-[#323232]", disc: "bg-[#d8d4e8] text-[#32265c]" },
  { i: "LR", n: "Redhead-Davis, Lamarr", talk: true, tile: "bg-[radial-gradient(circle,#64639a_15%,#4a4970_35%,#35334d_60%,#32314a_100%)]", disc: "bg-[#cddae8] text-[#123663]" },
  { i: "U", n: "usman230 (Guest)", mute: true, tile: "bg-[#3b3b3b]", disc: "bg-[#f8e9cd] text-[#835c12]" },
  { i: "ZJ", n: "", tile: "bg-[#1f1f1f]", disc: "bg-[#c8d4e8] text-[#12315f]" },
];

const TeamsWindow = () => (
  <div className="flex min-h-0 flex-1 flex-col border-l-2 border-t-4 border-black bg-[#1a1a1a]">
    <div className="grid h-[47px] shrink-0 grid-cols-[1fr_auto_1fr] items-center border-b-2 border-black bg-[#0a0a0a] text-[#797979]">
      <span />
      <span className="text-base">Meeting in "Team Dipsy"</span>
      <div className="flex justify-end pb-2 pr-[2px]">
        <button aria-label="Minimise" className="flex w-[49px] justify-center"><Minus className="h-[18px] w-[18px]" strokeWidth={1.5} /></button>
        <button aria-label="Restore" className="flex w-[49px] justify-center"><Svg c="h-[18px] w-[18px]" stroke="currentColor" strokeWidth="1.500"><path d="M3 6h15v16H3zM6 6V2h15v17h-3" /></Svg></button>
        <button aria-label="Close" className="flex w-[49px] justify-center"><X className="h-[22px] w-[22px]" strokeWidth={1.2} /></button>
      </div>
    </div>
    <div className="flex h-[75px] shrink-0 items-center bg-[#1f1f1f] pl-[34px] pr-[27px] text-white">
      <span className="text-base text-[#d6d6d6]">02:44:18</span>
      <div className="flex-1" />
      <button className="h-10 w-[177px] rounded-[3px] border border-[#6a6a6a] bg-[#2b2b2b] text-base font-semibold">Request control</button>
      <div className="ml-[43px] h-10 w-px bg-[#555]" />
      <div className="ml-[13px] flex">
        <IconCell label="People"><Svg c="h-7 w-7" stroke="currentColor" strokeWidth="1.500"><circle cx="8.500" cy="6.500" r="4.300" /><circle cx="18.500" cy="7.500" r="3" /><path d="M3.500 13.500h10a1.500 1.500 0 011.500 1.500v1a6.500 6.500 0 01-13 0v-1a1.500 1.500 0 011.500-1.500zM16 13.500h5a1.500 1.500 0 011.500 1.500c0 5-3 7-7 5.500" /></Svg></IconCell>
        <IconCell label="Chat"><Svg c="h-7 w-7" stroke="currentColor" strokeWidth="1.500"><path d="M12 2a10 10 0 11-4.700 18.800L2.500 22l1.200-4.700A10 10 0 0112 2zM8.500 10h7M8.500 14h4.500" /></Svg></IconCell>
        <IconCell label="Reactions"><Svg c="h-7 w-7" stroke="currentColor" strokeWidth="1.500"><path d="M9 19C5 18 5 14 2 10c1.500-1 2.500 0 3.500 1V5c0-1.500 2-1.500 2 0V3c0-1.500 2-1.500 2 0v1c0-1.500 2-1.500 2 0v2c0-1.500 2-1.500 2 0v5" fill="#cfcfcf" /><circle cx="16.500" cy="17" r="6" fill="#1f1f1f" /><path d="M14 18.500q2.500 2.500 5 0" /><circle cx="14.500" cy="15.500" r=".6" /><circle cx="18.500" cy="15.500" r=".6" /></Svg></IconCell>
        <IconCell label="More"><Svg c="h-6 w-6"><circle cx="3" cy="12" r="2.600" fill="currentColor" /><circle cx="12" cy="12" r="2.600" fill="currentColor" /><circle cx="21" cy="12" r="2.600" fill="currentColor" /></Svg></IconCell>
      </div>
      <div className="ml-4 h-10 w-px bg-[#555]" />
      <div className="ml-[15px] flex">
        <IconCell label="Camera off"><Svg c="h-7 w-7"><rect x="1.500" y="4" width="14.500" height="16" rx="3" fill="#fff" /><path d="M17 9l5.500-3.500v13L17 15z" fill="#fff" /><path d="M3 1l21 22" stroke="#1f1f1f" strokeWidth="3" /><path d="M1.500 1.500L22 23" stroke="#fff" strokeWidth="1.500" /></Svg></IconCell>
        <IconCell label="Muted"><MicOffIcon c="h-7 w-7" /></IconCell>
        <IconCell label="Share"><Svg c="h-7 w-7"><rect x="1" y="3" width="22" height="18" rx="2.500" fill="#fff" /><path d="M12 18V7M8 11l4-4 4 4" stroke="#1f1f1f" strokeWidth="1.700" /></Svg></IconCell>
      </div>
      <button className="ml-4 flex h-10 w-[131px] items-center justify-center gap-[10px] rounded-[3px] bg-[#c4314b] text-base font-semibold">
        <Svg c="h-[26px] w-[26px]"><path d="M12 7C6 7 1.500 9.500 1.500 13.500c0 2 1 2.700 2.500 2.400l2.500-.6c1.200-.3 1.500-1 1.500-2.300 2-1.200 6-1.200 8 0 0 1.300.3 2 1.500 2.300l2.500.6c1.500.3 2.500-.4 2.500-2.400C22.500 9.500 18 7 12 7z" fill="#fff" /></Svg>
        Leave
      </button>
    </div>
    <div className="ml-[3px] mr-[4px] mt-[4px] flex min-h-0 flex-1 bg-black">
      <div className="flex w-[263px] shrink-0 flex-col justify-end pb-[14px] pl-[18px] text-sm text-white">Redhead-Davis, Lamarr</div>
      <SharedScreen />
      <div className="w-[264px] shrink-0" />
    </div>
    <div className="mt-[3px] flex h-[118px] shrink-0 justify-end pr-px">
      {people.map((p) => (
        <div key={p.i} className={`relative flex w-[225px] justify-center pt-8 ${p.tile}`}>
          {p.talk && <span className="absolute left-[73px] top-[20px] h-[79px] w-[79px] rounded-full border-[5px] border-[#9ea2ff] bg-[#2f2e48]" />}
          <span className={`relative flex h-[55px] w-[55px] items-center justify-center rounded-full text-[21px] font-semibold ${p.disc}`}>{p.i}</span>
          <span className="absolute bottom-[5px] left-[18px] flex items-center gap-3 text-sm text-white">{p.n}{p.mute && <MicOffIcon c="h-4 w-4" />}</span>
        </div>
      ))}
    </div>
  </div>
);

/* ---------- Chrome window ---------- */

const FADE = "overflow-hidden whitespace-nowrap [mask-image:linear-gradient(to_right,black_60%,transparent)]";

const ChromeChrome = () => (
  <>
    <div className="flex h-[35px] shrink-0 items-center bg-black text-[11px] text-white">
      <div className="flex w-[91px] items-center pl-5"><OutlookIcon c="h-4 w-4" /><span className={`ml-[9px] w-[22px] ${FADE}`}>Mai</span><X className="ml-1 h-[11px] w-[11px]" strokeWidth={3} /></div>
      <div className="mt-px flex h-[34px] w-[84px] items-center rounded-t-lg bg-[#35363a] pl-3"><JiraIcon c="h-4 w-4" /><span className="ml-2 w-[20px]">QA</span><X className="ml-[7px] h-[11px] w-[11px]" strokeWidth={3} /></div>
      <div className="flex h-5 w-[82px] items-center border-r border-[#666] pl-[7px]"><QaMark c="h-[11px] w-4" color="#07384a" /><span className={`ml-2 w-[44px] ${FADE}`}>QA Com</span></div>
      <div className="flex h-5 w-[82px] items-center border-r border-[#666] pl-[6px]">
        <Svg c="h-4 w-4" vb="0 0 16 16"><path d="M0 0h7.500v7.500H0z" fill="#f25022" /><path d="M8.500 0H16v7.500H8.500z" fill="#7fba00" /><path d="M0 8.500h7.500V16H0z" fill="#00a4ef" /><path d="M8.500 8.500H16V16H8.500z" fill="#ffb900" /></Svg>
        <span className={`ml-[9px] w-[46px] ${FADE}`}>Text Mo</span>
      </div>
      <div className="flex h-5 w-[82px] items-center border-r border-[#666] pl-[7px]"><span className="h-4 w-4 rounded-full border-2 border-white bg-linear-to-b from-[#7a70d8] to-[#5bb5c9]" /><span className={`ml-2 w-[46px] ${FADE}`}>Hexis - I</span></div>
      <button aria-label="New tab" className="flex w-11 justify-center"><Plus className="h-4 w-4" /></button>
      <div className="flex-1" />
      <span className="mr-[13px] flex h-[15px] w-[15px] items-center justify-center rounded-full bg-white"><Tri dir="down" c="text-black" /></span>
      <div className="flex h-full items-start pt-[2px]">
        <button aria-label="Minimise" className="flex w-[46px] justify-center"><Minus className="h-3 w-3" /></button>
        <button aria-label="Maximise" className="flex w-[46px] justify-center"><Square className="h-3 w-3" /></button>
        <button aria-label="Close" className="flex w-[46px] justify-center"><X className="h-[14px] w-[14px]" strokeWidth={1.5} /></button>
      </div>
    </div>
    <div className="flex h-9 shrink-0 items-center bg-[#35363a] pl-[6px] pr-1 text-[13px] text-white">
      <button aria-label="Back" className="flex w-8 justify-center"><ArrowLeft className="h-[18px] w-[18px]" strokeWidth={2.500} /></button>
      <button aria-label="Forward" className="flex w-8 justify-center text-[#85868a]"><ArrowRight className="h-[18px] w-[18px]" strokeWidth={2.500} /></button>
      <button aria-label="Reload" className="flex w-8 justify-center"><RotateCw className="h-4 w-4" strokeWidth={3} /></button>
      <div className="ml-[6px] flex h-7 min-w-0 flex-1 items-center rounded-full bg-[#202124] px-[13px]">
        <Svg c="h-[13px] w-[11px] shrink-0" vb="0 0 11 13"><rect x="1" y="5" width="9" height="7.500" rx="1" fill="#e8eaed" /><path d="M3 6V3.500a2.500 2.500 0 015 0V6" stroke="#e8eaed" strokeWidth="1.500" /></Svg>
        <span className="ml-[10px] min-w-0 flex-1 truncate">team-1616578727154.atlassian.net<span className="text-[#9aa0a6]">/ji...</span></span>
        <Star className="mr-[-3px] h-[15px] w-[15px]" />
      </div>
      <div className="ml-[6px] flex w-8 justify-center"><span className="flex h-4 w-4 items-center justify-center rounded-full bg-[#e3141b]"><FaHandPaper className="h-[9px] w-[9px]" /></span></div>
      <div className="flex w-8 justify-center"><span className="flex h-4 w-4 items-end bg-[#5b5b5d] text-[10px] font-semibold leading-3 text-[#8e8e90]">Se</span></div>
      <div className="flex w-8 justify-center"><span className="flex h-4 w-4 items-center justify-center bg-[#1e2124]"><FaReact className="h-[14px] w-[14px] text-[#2fb9e8]" /></span></div>
      <div className="flex w-8 justify-center"><FaPuzzlePiece className="h-[15px] w-[15px]" /></div>
      <button className="ml-[2px] flex h-7 w-[81px] shrink-0 items-center rounded-full border border-[#8ab4f8] bg-[#363b45] pl-[2px] text-[11px] text-[#8ab4f8]"><span className="mr-2 flex h-[22px] w-[22px] items-center justify-center rounded-full bg-[#00897b] text-white">z</span>Paused</button>
      <button aria-label="Menu" className="flex w-9 justify-center"><EllipsisVertical className="h-[18px] w-[18px]" /></button>
    </div>
    <div className="flex h-[33px] shrink-0 items-center border-b border-[#202124] bg-[#35363a] pb-1 pl-[13px] pr-[14px] text-[11px] text-white">
      <a href="#apps" className="flex w-[68px] items-center gap-[9px]"><GridIcon c="h-[14px] w-[14px]" colors={["#ea4335", "#ea4335", "#ea4335", "#34a853", "#4285f4", "#fbbc05", "#34a853", "#fbbc05", "#fbbc05"]} />Apps</a>
      <a href="#recent" className="flex w-[151px] items-center gap-[9px]"><FaGlobeAmericas className="h-[14px] w-[14px]" />Recent device strea...</a>
      <a href="#work" className="flex w-[104px] items-center gap-[9px]"><span className="mx-[2px] h-[13px] w-[12px] rounded-[1px] bg-[#fbdc7c]" />Work things</a>
      <a href="#coding" className="flex items-center gap-[9px]"><span className="mx-[2px] h-[13px] w-[12px] rounded-[1px] bg-[#fbdc7c]" />Coding pages</a>
      <div className="flex-1" />
      <div className="mr-[10px] h-4 w-px bg-[#777]" />
      <a href="#reading" className="flex items-center gap-2"><Svg c="h-[15px] w-[15px]" stroke="#fff" strokeWidth="2"><path d="M2 2h20v20H2zM6 7.500h2M10 7.500h8M6 12h2M10 12h8M6 16.500h2M10 16.500h8" /></Svg>Reading list</a>
    </div>
  </>
);

const EpicCard = ({ color, name }) => (
  <div className="mr-1 flex h-[54px] shrink-0 flex-col rounded-[3px] bg-white px-3 shadow-[0_1px_1px_#b3bac5]">
    <div className="mt-[13px] flex h-5 items-center text-[#5e6c84]"><ChevronRight className="h-3 w-3" strokeWidth={4} /><span className={`ml-1 h-4 w-4 rounded-[3px] ${color}`} /><span className="ml-2">{name}</span></div>
    <div className="mx-[2px] mt-[5px] h-1 rounded-full bg-[#ebecf0]" />
  </div>
);

const chromeNav = [["Your work", "w-24"], ["Projects", "w-[83px]"], ["More", "w-[72px]"]];

const ChromeWindow = () => (
  <div className="relative z-10 flex min-w-0 flex-1 flex-col overflow-hidden bg-white shadow-[0_0_22px_rgba(0,0,0,0.5)]">
    <ChromeChrome />
    <header className="z-10 flex h-14 shrink-0 items-center border-b border-[#dfe1e6] pl-[22px] text-[13px] font-medium text-[#344563] shadow-sm">
      <GridIcon c="h-4 w-4" /><JiraIcon c="ml-4 h-5 w-5" />
      <nav className="ml-6 flex h-full">
        {chromeNav.map(([label, w]) => (
          <div key={label} className={`flex h-full ${w}`}>
            <a href="#nav" className={`-mb-px flex items-center gap-1 border-b-[3px] pt-[3px] ${label === "Projects" ? "border-[#0052cc] text-[#0052cc]" : "border-transparent"}`}>{label}<ChevronDown className="h-[11px] w-[11px] opacity-60" strokeWidth={4} /></a>
          </div>
        ))}
      </nav>
      <button aria-label="Create" className="flex h-8 w-8 items-center justify-center rounded-[3px] bg-[#0052cc] text-white"><Plus className="h-4 w-4" /></button>
      <div className="flex-1" />
      <div className="flex w-9 justify-center"><Search className="h-5 w-5" /></div>
      <div className="flex w-10 justify-center"><BellIcon c="h-[18px] w-[18px]" /></div>
      <div className="flex w-10 justify-center"><HelpIcon c="h-[21px] w-[21px]" /></div>
      <div className="flex w-10 justify-center"><GearIcon c="h-5 w-5" /></div>
      <div className="mr-[14px] flex w-11 justify-center"><span className="flex h-6 w-6 items-center justify-center rounded-full bg-[#00a3bf] text-[10px] text-[#172b4d]">ZJ</span></div>
    </header>
    <div className="flex min-h-0 flex-1 text-[13px] text-[#42526e]">
      <aside className="relative w-[22px] shrink-0 border-r-2 border-[#ebecf0]">
        <button aria-label="Expand sidebar" className="absolute left-2 top-8 flex h-6 w-6 items-center justify-center rounded-full bg-white shadow-[0_0_3px_#8993a4]"><ChevronRight className="h-3 w-3" strokeWidth={3} /></button>
      </aside>
      <main className="flex min-w-0 flex-1 flex-col pl-[30px]">
        <div className="mt-[26px] flex h-5 items-center gap-[10px] text-[#6b778c]"><a href="#p">Projects</a><span>/</span><a href="#qa">QA Cinema Project</a></div>
        <h1 className="mt-1 h-8 text-[22px] font-medium leading-8 text-[#172b4d]">Backlog</h1>
        <div className="mt-[14px] flex h-10 shrink-0 items-center">
          <label className="flex h-full w-[120px] items-center rounded-[3px] border-2 border-[#dfe1e6] bg-[#fafbfc] pr-[10px]"><input aria-label="Filter issues" className="w-20 bg-transparent outline-none" /><Search className="ml-auto h-[14px] w-[14px]" /></label>
          <span className="ml-4 flex h-8 w-8 items-center justify-center rounded-full bg-[#00a3bf] text-sm font-medium text-[#172b4d]">ZJ</span>
          <span className="ml-[10px] flex h-8 w-8 items-center justify-center rounded-full bg-[#dfe1e6] text-[#7a869a]"><AddPersonIcon c="h-5 w-5" /></span>
          <button className="ml-[25px] flex w-[107px] items-center gap-1">Epic<span className="flex h-[18px] w-[18px] items-center justify-center rounded-full bg-[#0052cc] text-xs text-white">1</span><ChevronDown className="ml-2 h-3 w-3" strokeWidth={3.500} /></button>
          <button>Clear filters</button>
        </div>
        <div className="mt-4 flex min-h-0 flex-1">
          <section className="mb-[17px] mt-2 flex w-[270px] shrink-0 flex-col rounded bg-[#f4f5f7]">
            <div className="flex h-10 shrink-0 items-center justify-between pl-4 pr-[13px]"><span>Epic</span><X className="h-[14px] w-[14px]" strokeWidth={2.500} /></div>
            <div className="flex min-h-0 flex-1">
              <div className="flex min-h-0 min-w-0 flex-1 flex-col pl-1">
                <div className="flex min-h-0 flex-1 flex-col justify-start gap-1 overflow-hidden">
                  <div className="mr-1 flex h-6 shrink-0 items-start rounded-b-[3px] bg-white pl-3 text-[#5e6c84] shadow-[0_1px_1px_#b3bac5]"><span className="leading-[10px]">Issues without epic</span></div>
                  <EpicCard color="bg-[#8777d9]" name="Site Navigation" />
                  <EpicCard color="bg-[#57d9a3]" name="Movie Details" />
                  <EpicCard color="bg-[#de350b]" name="Bookings" />
                  <EpicCard color="bg-[#ff991f]" name="Discussion Board" />
                  <div className="mr-1 flex shrink-0 flex-col rounded-t-[3px] bg-[#344563] px-3 pb-1 text-[#f4f5f7]">
                    <div className="mt-3 flex h-5 items-center font-medium"><ChevronDown className="h-3 w-3" strokeWidth={4} /><span className="ml-1 h-4 w-4 rounded-[3px] bg-[#8777d9]" /><span className="ml-2">Local Area</span></div>
                    <div className="mx-[2px] mt-[6px] h-1 rounded-full bg-[#ebecf0]" />
                  </div>
                </div>
                <button className="mb-[5px] mr-1 mt-1 flex h-9 shrink-0 items-center justify-center gap-[6px] rounded-[2px] bg-[#ebecf0] text-[#505f79]"><Plus className="h-[14px] w-[14px]" />Create Epic</button>
              </div>
              <div className="flex w-[17px] flex-col items-center justify-between bg-[#f1f1f1] py-[5px]"><div className="flex flex-col items-center"><Tri dir="up" /><div className="mt-[15px] h-[206px] w-[13px] bg-[#c1c1c1]" /></div><Tri dir="down" /></div>
            </div>
          </section>
          <section className="ml-2 flex min-w-0 flex-1 flex-col">
            <div className="flex min-h-0 flex-1 flex-col overflow-hidden pl-3 pt-5">
              <div className="flex h-6 items-center whitespace-nowrap"><ChevronDown className="ml-2 h-3 w-3" strokeWidth={4} /><b className="ml-[6px] font-medium text-[#172b4d]">Backlog</b><span className="ml-2 text-[#6b778c]">(1 of 20 issues visible)</span></div>
              <div className="mt-[11px] flex h-[42px] items-center whitespace-nowrap border-y border-l border-[#ebecf0] bg-[#fafbfc] pl-4"><StoryIcon c="h-[14px] w-[14px] shrink-0" /><a href="#issue" className="ml-[9px] w-[57px] text-[#6b778c]">QAC-16</a><span className="w-[217px] shrink-0 text-[#172b4d]">As a user who has never been t...</span><span className="shrink-0 rounded-[3px] bg-[#eae6ff] px-[3px] text-[11px] leading-6 text-[#403294]">L</span></div>
              <button className="mt-[7px] flex h-6 items-center gap-[5px] pl-3"><Plus className="h-[14px] w-[14px]" />Create issue</button>
            </div>
            <div className="flex h-[17px] items-center justify-between bg-[#f1f1f1] px-1"><div className="flex items-center gap-[5px]"><Tri dir="left" c="text-[#a3a3a3]" /><div className="h-[13px] w-[190px] bg-[#c1c1c1]" /></div><Tri dir="right" /></div>
          </section>
          <div className="flex w-[17px] flex-col"><div className="flex flex-1 flex-col items-center justify-between bg-[#f1f1f1] py-[5px]"><Tri dir="up" c="text-[#a3a3a3]" /><Tri dir="down" c="text-[#a3a3a3]" /></div><div className="h-[17px] bg-[#dcdcdc]" /></div>
        </div>
      </main>
    </div>
    <button className="absolute bottom-6 right-[44px] flex h-11 w-[148px] items-center justify-center gap-3 rounded-full bg-[#6554c0] text-[15px] font-semibold text-white shadow-lg">
      <Svg c="h-[18px] w-[14px]" vb="0 0 14 18"><path d="M7 0a6 6 0 016 6c0 3-2.500 4-3 7H4c-.5-3-3-4-3-7a6 6 0 016-6zM4.500 14.500h5v1a2 2 0 01-2 2h-1a2 2 0 01-2-2z" fill="#fff" /></Svg>Quickstart
    </button>
  </div>
);

/* ---------- Edge window with the PDF ---------- */

const sections = [
  ["Home Page", "The QA Cinemas site needs a home page. The home page shall:", ["Be generally attractive", "The page shall be the default for the entire site", "Starting from the home page, site users may navigate to other areas of the site", "The site should have a picture or graphic evocative of the movies or the cinema on it", "Communicate to the viewer the purpose of the site"]],
  ["Listings Gallery", "The site should include an image gallery posters for the movies currently showing.", ["The gallery is part of the overall site navigation", "At least 4 different movie images", "Each image appears on its own page", "Each image has supporting text including Title, actors, director and showing times"]],
  ["Opening Times", "The site has a dedicated page to list the opening times.", ["The page is part of the overall site navigation", "The page has details about the opening times of the cinema."]],
];

const EdgeWindow = () => (
  <div className="flex min-w-0 flex-1 flex-col overflow-hidden border-t border-[#999] bg-[#e6e6e6]">
    <div className="flex h-10 shrink-0 items-end border-b border-[#cfcfcf] text-[11px] text-[#444]">
      <div className="flex h-8 w-12 items-center justify-center text-black"><PagesIcon c="h-[17px] w-[17px]" /></div>
      <div className="-mb-px flex h-8 w-[240px] items-center rounded-t-md bg-[#f7f7f7] pl-[10px]">
        <Svg c="h-4 w-4" vb="0 0 16 16"><path d="M2 0h9l3 3v13H2z" fill="#fff" stroke="#222" /><rect y="5" width="16" height="7" rx="1" fill="#f2403c" /><path d="M2.500 10.500v-4h2v2h-2M7 6.500v4q2.500 0 2.500-2t-2.500-2M11.500 10.500v-4h2.500M11.500 8.500h2" stroke="#fff" strokeWidth=".9" /></Svg>
        <span className="ml-[11px] w-[176px] overflow-hidden whitespace-nowrap [mask-image:linear-gradient(to_right,black_93%,transparent)]">Specialism Project (QACinemas) S</span>
        <X className="h-3 w-3 text-black" />
      </div>
      <button aria-label="New tab" className="flex h-8 w-[34px] items-center justify-center text-black"><Plus className="h-[17px] w-[17px]" strokeWidth={1.5} /></button>
      <div className="flex-1" />
      <div className="flex h-full items-start pr-[1px] pt-2 text-[#888]">
        <button aria-label="Minimise" className="flex w-[46px] justify-center"><Minus className="h-3 w-3" strokeWidth={1.5} /></button>
        <button aria-label="Maximise" className="flex w-[46px] justify-center"><Square className="h-3 w-3" strokeWidth={1.5} /></button>
        <button aria-label="Close" className="flex w-[46px] justify-center"><X className="h-[14px] w-[14px]" strokeWidth={1.2} /></button>
      </div>
    </div>
    <div className="flex h-[39px] shrink-0 items-center border-b border-[#cfcfcf] bg-[#f7f7f7] pl-[7px] text-[13px] text-black">
      <button aria-label="Back" className="flex w-11 justify-center text-[#c6c6c6]"><ArrowLeft className="h-5 w-5" strokeWidth={1.3} /></button>
      <button aria-label="Forward" className="flex w-11 justify-center text-[#c6c6c6]"><ArrowRight className="h-5 w-5" strokeWidth={1.3} /></button>
      <button aria-label="Reload" className="flex w-11 justify-center"><RotateCw className="h-[18px] w-[18px]" strokeWidth={1.7} /></button>
      <div className="ml-[6px] flex h-[30px] min-w-0 flex-1 items-center rounded bg-white pl-[14px] shadow-sm">
        <Svg c="h-4 w-4 text-[#777]" stroke="currentColor" strokeWidth="1.500"><circle cx="12" cy="12" r="11" /><path d="M12 10v8M12 6v2" /></Svg>
        <span className="ml-2 text-[#666]">File</span><span className="ml-[12px] h-4 w-px bg-[#888]" /><span className="ml-3">C:/Users/zayne/One...</span>
        <div className="flex-1" />
        <div className="flex w-[37px] justify-center"><Svg c="h-[17px] w-[17px]" stroke="#000" strokeWidth="1.800"><rect x="2" y="7" width="20" height="14" rx="2.500" /><path d="M8 7V2.500h8V7" /></Svg></div>
        <div className="flex w-[37px] justify-center"><ZoomOut className="h-4 w-4 text-[#888]" strokeWidth={1.5} /></div>
        <div className="flex w-[38px] justify-center"><StarPlus c="h-[18px] w-[18px] text-[#777]" /></div>
      </div>
      <div className="ml-[6px] flex w-11 justify-center"><StarList c="h-[18px] w-[18px]" /></div>
      <div className="flex w-[46px] justify-center"><CollectIcon c="h-[17px] w-[17px]" /></div>
      <div className="flex w-[45px] justify-center"><ProfileDisc c="h-[23px] w-[23px]" /></div>
      <div className="mr-[6px] flex w-[46px] justify-center"><Ellipsis className="h-4 w-4" /></div>
    </div>
    <div className="flex min-h-0 flex-1">
      <div className="flex min-w-0 flex-1 flex-col gap-[13px] overflow-hidden pl-[6px] pr-[5px] font-['Lato',sans-serif] text-[11px] leading-4 text-[#333]">
        <div className="flex h-[200px] shrink-0 flex-col justify-end bg-white pb-9 pl-[78px] text-[10px] shadow-[0_0_5px_#777]"><span>5&nbsp; | &nbsp;Specialism Project Specification</span></div>
        <article className="flex-1 bg-white pl-[78px] pr-[81px] pt-[27px] shadow-[0_0_5px_#777]">
          <QaMark c="h-[27px] w-[39px]" />
          <hr className="mt-[6px] border-t-2 border-[#dcdcdc]" />
          <h1 className="mt-[17px] text-[21px] leading-7 text-[#004050]">Website Requirements</h1>
          <p className="mr-[-20px]">These requirements have been deemed by the Client as ‘essential’ components of the site, and<br />therefore should be part of your MVP.</p>
          {sections.map(([title, lead, list]) => (
            <section key={title} className="mt-[9px]">
              <h2 className="font-bold text-[#004f63]">{title}</h2><p>{lead}</p>
              <ul>{list.map((t) => <li key={t} className="flex whitespace-nowrap pl-5"><span className="w-5">•</span>{t}</li>)}</ul>
            </section>
          ))}
        </article>
      </div>
      <div className="flex w-[18px] flex-col items-center justify-between bg-[#f1f1f1] py-[5px]"><div className="flex flex-col items-center"><Tri dir="up" /><div className="mt-[297px] h-[42px] w-[13px] bg-[#c1c1c1]" /></div><Tri dir="down" /></div>
    </div>
  </div>
);

export default function App() {
  return (
    <div className={`flex h-screen w-full overflow-hidden bg-black ${UI}`}>
      <div className="relative z-20 flex min-w-0 flex-[1920] basis-0 flex-col"><TeamsWindow /><MainTaskbar /></div>
      <div className="grid min-w-0 flex-[1360] basis-0 grid-rows-[728fr_40px_312fr]">
        <div className="flex min-h-0"><ChromeWindow /><EdgeWindow /></div>
        <SideTaskbar />
      </div>
    </div>
  );
}
